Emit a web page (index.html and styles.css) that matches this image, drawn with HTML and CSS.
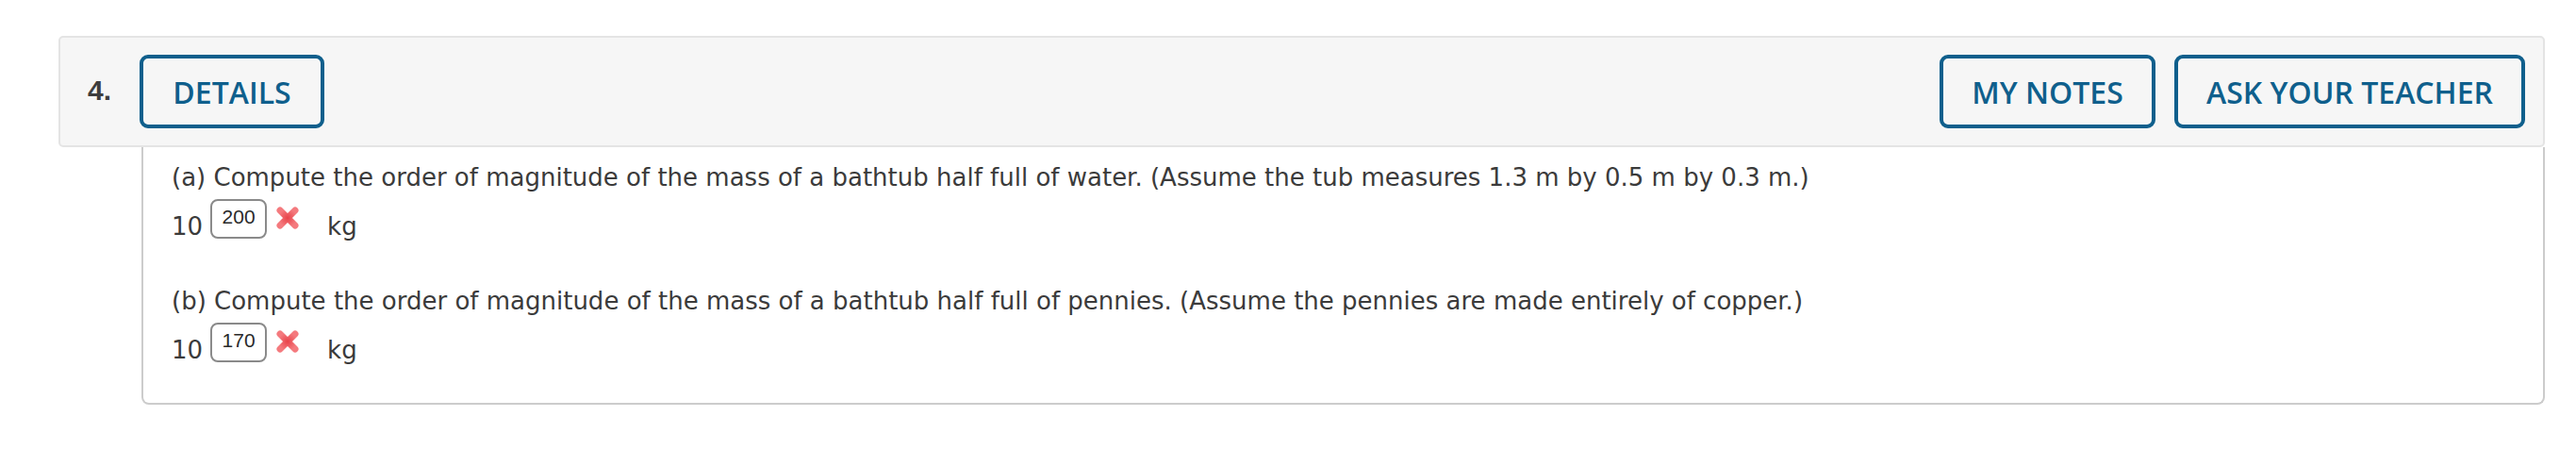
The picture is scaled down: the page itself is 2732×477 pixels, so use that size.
FILE: index.html
```html
<!DOCTYPE html>
<html>
<head>
<meta charset="utf-8">
<link rel="stylesheet" href="styles.css">
</head>
<body>
<div class="question">
  <div class="q-header">
    <span class="q-num">4.</span>
    <button class="btn btn-details">DETAILS</button>
    <div class="spacer"></div>
    <button class="btn btn-notes">MY NOTES</button>
    <button class="btn btn-ask">ASK YOUR TEACHER</button>
  </div>
  <div class="q-body">
    <p class="prompt">(a) Compute the order of magnitude of the mass of a bathtub half full of water. (Assume the tub measures 1.3 m by 0.5 m by 0.3 m.)</p>
    <div class="answer">
      <span class="base">10</span>
      <span class="exp">200</span>
      <svg class="xmark" width="26" height="26" viewBox="0 0 26 26"><defs><radialGradient id="g1" cx="50%" cy="50%" r="60%"><stop offset="0" stop-color="#e8434a"/><stop offset="1" stop-color="#f47a7e"/></radialGradient></defs><path d="M5 5 L21 21 M21 5 L5 21" stroke="url(#g1)" stroke-width="7" stroke-linecap="round"/></svg>
      <span class="unit">kg</span>
    </div>
    <p class="prompt prompt-b">(b) Compute the order of magnitude of the mass of a bathtub half full of pennies. (Assume the pennies are made entirely of copper.)</p>
    <div class="answer">
      <span class="base">10</span>
      <span class="exp">170</span>
      <svg class="xmark" width="26" height="26" viewBox="0 0 26 26"><defs><radialGradient id="g2" cx="50%" cy="50%" r="60%"><stop offset="0" stop-color="#e8434a"/><stop offset="1" stop-color="#f47a7e"/></radialGradient></defs><path d="M5 5 L21 21 M21 5 L5 21" stroke="url(#g2)" stroke-width="7" stroke-linecap="round"/></svg>
      <span class="unit">kg</span>
    </div>
  </div>
</div>
</body>
</html>
```
FILE: styles.css
```css
html, body {
  margin: 0;
  padding: 0;
  background: #ffffff;
}
.question {
  margin: 38px 33px 0 62px;
}
.q-header {
  box-sizing: border-box;
  height: 118px;
  background: #f6f6f6;
  border: 2px solid #e4e4e4;
  border-radius: 5px;
  display: flex;
  align-items: center;
  padding: 0 19px 0 29px;
}
.q-num {
  font-family: "Liberation Sans", Arial, sans-serif;
  font-weight: bold;
  font-size: 30px;
  color: #3e3e3e;
  width: 55px;
  margin-top: -2px;
}
.spacer {
  flex: 1;
}
.btn {
  box-sizing: border-box;
  height: 78px;
  background: transparent;
  border: 4px solid #0f5f8c;
  border-radius: 9px;
  color: #0f5f8c;
  font-family: "Open Sans", sans-serif;
  font-weight: 600;
  font-size: 32px;
  padding: 0;
  margin-top: 0;
}
.btn-details {
  width: 196px;
}
.btn-notes {
  width: 229px;
  margin-right: 20px;
}
.btn-ask {
  width: 372px;
}
.q-body {
  box-sizing: border-box;
  margin-left: 88px;
  border: 2px solid #cccccc;
  border-top: none;
  border-radius: 0 0 8px 8px;
  padding: 14px 30px 45px 30px;
  height: 273px;
}
.prompt {
  margin: 0;
  font-family: "DejaVu Sans", Verdana, sans-serif;
  font-size: 26px;
  line-height: 36px;
  color: #3b3b3b;
}
.prompt-b {
  margin-top: 48px;
}
.answer {
  display: flex;
  align-items: flex-end;
  height: 42px;
  margin-top: 5px;
  font-family: "DejaVu Sans", Verdana, sans-serif;
  font-size: 26px;
  color: #3b3b3b;
}
.base {
  line-height: 26px;
  margin-bottom: 0;
}
.exp {
  box-sizing: border-box;
  width: 60px;
  height: 42px;
  margin-left: 8px;
  border: 2px solid #8a8a8a;
  border-radius: 8px;
  font-family: "Liberation Sans", Arial, sans-serif;
  font-size: 21px;
  line-height: 26px;
  text-align: center;
  color: #2a2a2a;
  padding-top: 4px;
}
.xmark {
  margin-left: 9px;
  margin-bottom: 9px;
}
.unit {
  margin-left: 29px;
  line-height: 26px;
  margin-bottom: 0;
}
```
